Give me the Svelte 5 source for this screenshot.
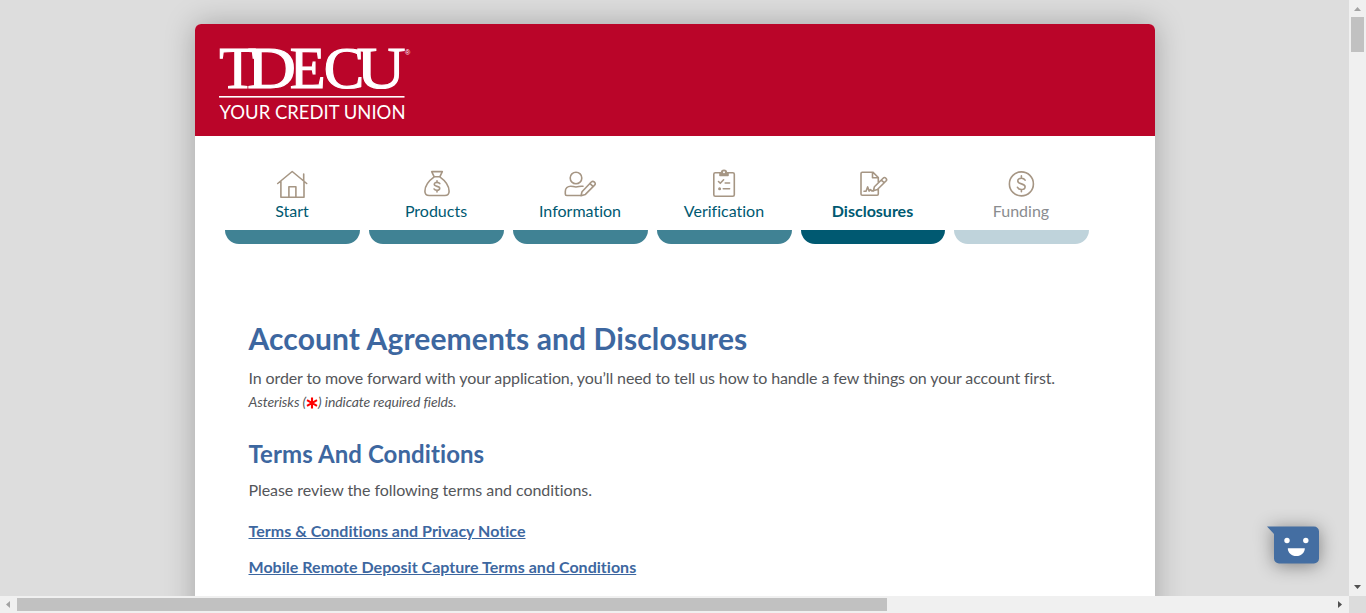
<script>
  const steps = [
    { name: 'Start', icon: 'home', state: 'done' },
    { name: 'Products', icon: 'bag', state: 'done' },
    { name: 'Information', icon: 'person', state: 'done' },
    { name: 'Verification', icon: 'clipboard', state: 'done' },
    { name: 'Disclosures', icon: 'sign', state: 'current' },
    { name: 'Funding', icon: 'coin', state: 'todo' }
  ];
  const links = [
    'Terms & Conditions and Privacy Notice',
    'Mobile Remote Deposit Capture Terms and Conditions'
  ];
  const mark = [
    { ch: 'T', x: 0.3, w: 37 },
    { ch: 'D', x: 28, w: 49 },
    { ch: 'E', x: 70.8, w: 35.8 },
    { ch: 'C', x: 104.8, w: 40.5 },
    { ch: 'U', x: 137.6, w: 49 }
  ];
</script>

<div class="window">
  <div class="viewport">
    <div class="card">
      <header>
        <svg class="logo" width="196" height="76" viewBox="0 0 196 76" fill="#fff">
          {#each mark as m}
            <text class="mark" y="40" x={m.x} font-size="58.5" textLength={m.w} lengthAdjust="spacingAndGlyphs">{m.ch}</text>
          {/each}
          <text class="reg" x="186" y="6.5" font-size="7">®</text>
          <rect x="0" y="48" width="185.5" height="1.6" />
          <text class="tag" x="0.5" y="71" font-size="18.6" textLength="186" lengthAdjust="spacingAndGlyphs">YOUR CREDIT UNION</text>
        </svg>
      </header>

      <nav>
        {#each steps as step}
          <div class="step {step.state}">
            <svg class="icon" width="34" height="32" viewBox="0 0 34 32">
              {#if step.icon === 'home'}
                <path d="M2.7 15.5 17.2 3.5l14.5 12M28.7 13V6M5.9 13v16.2H29V13M13.9 29V18.7h7V29" />
              {:else if step.icon === 'bag'}
                <g transform="translate(.7 0)">
                  <path d="M12 3.6h10.6l-2.5 5.2h-5.6zM14.5 8.8C10 12 5.2 17 5.2 23.2c0 2.8 1.8 4.3 4.3 4.3h15.6c2.5 0 4.3-1.5 4.3-4.3 0-6.2-4.8-11.2-9.3-14.4" />
                  <path d="M20.1 15.6c-.7-.9-1.7-1.2-2.8-1.2-1.6 0-2.7.8-2.7 1.9 0 2.8 5.4 1.3 5.4 4 0 1.2-1.2 2-2.7 2-1.2 0-2.2-.4-2.9-1.3M17.3 12.8v1.6M17.3 22.3v1.7" />
                </g>
              {:else if step.icon === 'person'}
                <circle cx="13" cy="10" r="5.8" />
                <path d="M17 27.5H3.8c-1 0-1.5-.6-1.5-1.5v-2.5c0-3.3 2.4-5.3 5.4-5.3 2 0 3 .8 5.3.8s3.5-.8 5.5-.8h1.5M19 23.8l9.3-9.8c2-1.9 5.4 1 3.3 3.1l-9.2 9.3-4.4 1.3zM26.8 15.4l3.4 3.2" />
              {:else if step.icon === 'clipboard'}
                <rect x="6.8" y="4.8" width="20.5" height="23.5" rx="1.5" />
                <path fill="#a69684" d="M13 4.8v2.7h8V4.8h-1.6a2.4 2.4 0 0 0-4.8 0z" />
                <path d="M11.5 13.5l1.8 1.8 3.3-3.5M18.2 15h4.4M16.3 20.8h6.3" />
                <circle cx="12.6" cy="20.8" r=".7" />
                <circle cx="17" cy="4.3" r="1" fill="#fff" stroke="none" />
              {:else if step.icon === 'sign'}
                <path d="M22.3 14V9.5l-5.5-5.3H6.2c-.7 0-1.2.5-1.2 1.2v20.7c0 .8.5 1.2 1.2 1.2h14.9c.8 0 1.2-.5 1.2-1.2v-4.6M16.5 4.3v5.5h5.8M18.4 18.7l8.7-8.5c1.8-1.8 4.7.9 2.9 2.8l-8.6 8.5-4 1.2zM25.3 12l3 2.8" />
                <path d="M8 23.2h2l1.7-4.3 1.4 4.2 1.5-1.6 1 1.4h1.6" />
              {:else}
                <g transform="translate(.4 0)">
                  <circle cx="17" cy="15.9" r="12" />
                  <path d="M20.7 12.2c-.7-1.3-2-2-3.7-2-2.1 0-3.6 1-3.6 2.7 0 4 7.3 2 7.3 5.8 0 1.7-1.6 2.8-3.7 2.8-1.8 0-3.2-.8-3.9-2.2M17 7.9v2.3M17 21.5v2.3" />
                </g>
              {/if}
            </svg>
            <span class="label">{step.name}</span>
            <span class="bar"></span>
          </div>
        {/each}
      </nav>

      <main>
        <h1>Account Agreements and Disclosures</h1>
        <p class="intro">In order to move forward with your application, you’ll need to tell us how to handle a few things on your account first.</p>
        <p class="note">Asterisks (<svg width="12" height="12" viewBox="0 0 12 12"><path d="M6 .5v11M1 3.2l10 5.6M11 3.2 1 8.8" /></svg>) indicate required fields.</p>
        <h2>Terms And Conditions</h2>
        <p class="review">Please review the following terms and conditions.</p>
        {#each links as link}
          <p class="link"><a href="#terms">{link}</a></p>
        {/each}
      </main>
    </div>

    <svg class="chat" width="56" height="42" viewBox="0 0 56 42">
      <path fill="#446ea2" d="M1 .5h47a5 5 0 0 1 5 5v27a5 5 0 0 1-5 5H13a5 5 0 0 1-5-5V8z" />
      <circle cx="21" cy="14.5" r="2.7" fill="#fff" />
      <circle cx="39.8" cy="14.5" r="2.7" fill="#fff" />
      <path fill="#fff" d="M21.8 22.2h17c0 4.5-3.6 7.8-8.5 7.8s-8.5-3.3-8.5-7.8z" />
    </svg>
  </div>

  <div class="vbar">
    <svg width="17" height="17"><path d="M5 11h7L8.5 7z" fill="#a3a3a3" /></svg>
    <div class="vthumb"></div>
    <svg class="end" width="17" height="17"><path d="M5 6h7l-3.5 4z" fill="#505050" /></svg>
  </div>
  <div class="hbar">
    <svg width="17" height="17"><path d="M10 5v7L6 8.5z" fill="#a3a3a3" /></svg>
    <div class="hthumb"></div>
    <svg class="end" width="17" height="17"><path d="M6 5v7l4-3.5z" fill="#505050" /></svg>
  </div>
  <div class="corner"></div>
</div>

<style>
  :global(body) { margin: 0; overflow: hidden; }
  .window {
    display: grid;
    grid-template: 596px 17px / 1349px 17px;
    width: 1366px;
    height: 613px;
    font-family: Lato, sans-serif;
    font-size: 16px;
    font-variant-ligatures: none;
    color: #54565a;
  }
  .viewport { position: relative; overflow: hidden; background: #ddd; }
  .card {
    box-sizing: border-box;
    width: 960px;
    height: 700px;
    margin: 24px 0 0 194.5px;
    border-radius: 6px;
    background: #fff;
    box-shadow: 0 0 30px rgba(0, 0, 0, .26);
  }
  header {
    box-sizing: border-box;
    height: 112px;
    padding: 24px 0 0 24.5px;
    border-radius: 6px 6px 0 0;
    background: #ba0529;
  }
  .logo { display: block; overflow: visible; }
  .mark { font-family: "Liberation Serif", serif; stroke: #fff; stroke-width: 1.1; }
  .reg { font-family: "Liberation Sans", sans-serif; }
  .tag { font-family: Lato, sans-serif; }
  nav { display: flex; gap: 9px; padding: 32px 0 0 30px; }
  .step { display: flex; flex-direction: column; align-items: center; width: 135px; color: #005971; }
  .current { width: 144px; font-weight: 700; }
  .todo { color: #8a8c8f; }
  .icon { display: block; fill: none; stroke: #a69684; stroke-width: 1.6; stroke-linejoin: round; stroke-linecap: round; }
  .label { height: 30px; line-height: 22px; }
  .bar { width: 100%; height: 14px; border-radius: 0 0 15px 15px; background: #408294; }
  .current .bar { background: #005971; }
  .todo .bar { background: #bfd3db; }
  main { padding: 76px 54px 0; }
  h1, h2, p { margin: 0; }
  h1 { font-size: 30px; line-height: 36px; font-weight: 700; letter-spacing: .11px; color: #3d67a0; }
  h2 { margin-top: 25px; font-size: 24px; line-height: 30px; font-weight: 700; letter-spacing: .08px; color: #3d67a0; }
  .intro { margin-top: 10px; line-height: 24px; letter-spacing: -.11px; white-space: nowrap; }
  .note { line-height: 24px; font-size: 14px; letter-spacing: -.1px; font-style: italic; }
  .note svg { vertical-align: -1.5px; fill: none; stroke: red; stroke-width: 2.1; }
  .review { margin: 9px 0 17px; line-height: 24px; letter-spacing: -.06px; }
  .link { margin-bottom: 12px; line-height: 24px; font-weight: 700; letter-spacing: .025px; }
  a { color: #3d67a0; text-decoration: underline; }
  .chat { position: absolute; left: 1266px; top: 526px; overflow: visible; filter: drop-shadow(0 2px 9px rgba(0, 0, 0, .42)); }
  .vbar, .hbar { display: flex; background: #f0f0f0; }
  .vbar { flex-direction: column; }
  .vbar svg, .hbar svg { display: block; flex: none; }
  .vthumb { width: 13px; height: 35px; margin-left: 2px; background: #c1c1c1; }
  .hthumb { width: 870px; height: 13px; margin-top: 2px; background: #c1c1c1; }
  .vbar .end { margin-top: auto; }
  .hbar .end { margin-left: auto; }
  .corner { background: #dcdcdc; }
</style>
